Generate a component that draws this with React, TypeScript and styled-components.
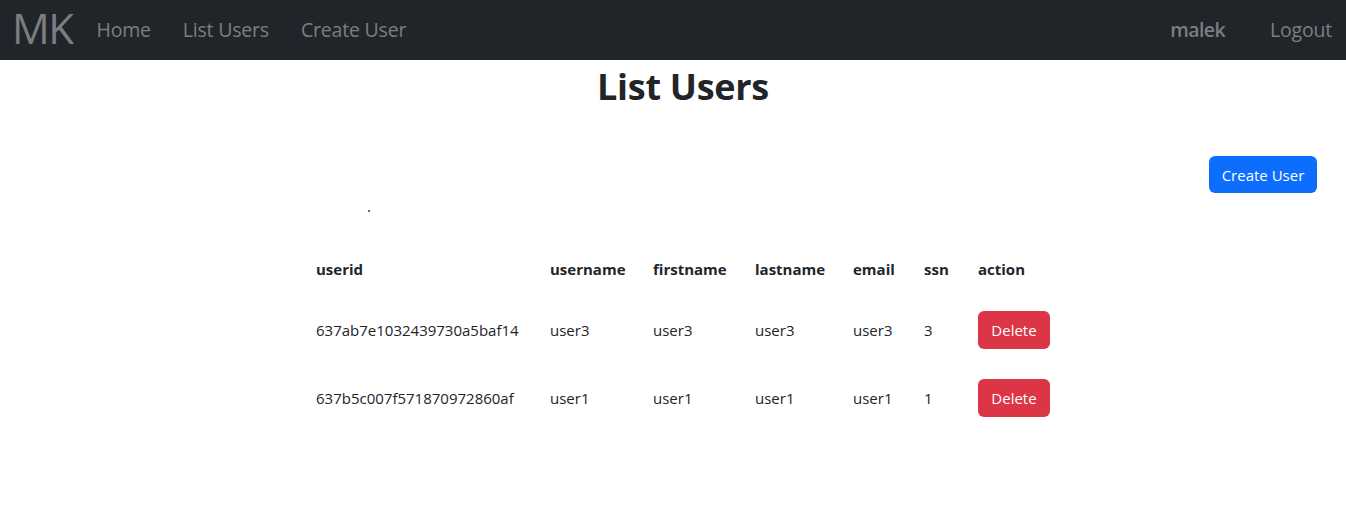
import React from "react";
import styled, { createGlobalStyle } from "styled-components";

const Global = createGlobalStyle`
  html, body { margin: 0; padding: 0; background: #fff; }
  body { font-family: "Open Sans", "Noto Sans", sans-serif; color: #212529; }
  * { box-sizing: border-box; }
`;

const Navbar = styled.nav`
  height: 60px;
  background: #212529;
  display: flex;
  align-items: center;
  padding: 0 14px 0 12px;
`;

const Brand = styled.span`
  font-size: 42px;
  color: #7b7e81;
  letter-spacing: -1.5px;
  margin-right: 24px;
  line-height: 1;
  margin-top: -4px;
`;

const NavList = styled.div<{ $right?: boolean }>`
  display: flex;
  align-items: center;
  gap: ${(p) => (p.$right ? "45px" : "32px")};
  margin-left: ${(p) => (p.$right ? "auto" : "0")};
  margin-top: -2px;
`;

const NavLink = styled.a<{ $strong?: boolean }>`
  font-size: 19.5px;
  color: #7b7e81;
  text-decoration: none;
  font-weight: ${(p) => (p.$strong ? 600 : 400)};
  letter-spacing: ${(p) => (p.$strong ? "-0.6px" : "-0.2px")};
`;

const Title = styled.h1`
  margin: 2px 0 0;
  padding-left: 20px;
  text-align: center;
  font-size: 36px;
  font-weight: 700;
  letter-spacing: -0.3px;
  line-height: 50px;
`;

const ToolRow = styled.div`
  display: flex;
  justify-content: flex-end;
  padding: 44px 29px 0 0;
`;

const Button = styled.button<{ $variant: "primary" | "danger" }>`
  font-family: inherit;
  font-size: 15px;
  border: none;
  border-radius: 6px;
  color: #fff;
  cursor: pointer;
  background: ${(p) => (p.$variant === "primary" ? "#0d6efd" : "#dc3545")};
`;

const CreateButton = styled(Button)`
  width: 108px;
  height: 37px;
`;

const DeleteButton = styled(Button)`
  width: 72px;
  height: 38px;
`;

const Dot = styled.div`
  margin: 17px 0 0 368px;
  width: 2px;
  height: 2px;
  background: #666;
`;

const Table = styled.div`
  margin: 30px 0 0 316px;
  display: grid;
  grid-template-columns: 234px 103px 102px 98px 71px 54px 80px;
  align-items: center;
  font-size: 15px;
`;

const Head = styled.div`
  font-weight: 700;
  height: 54px;
  display: flex;
  align-items: center;
`;

const Cell = styled.div`
  height: 68px;
  display: flex;
  align-items: center;
`;

const users = [
  { id: "637ab7e1032439730a5baf14", username: "user3", first: "user3", last: "user3", email: "user3", ssn: "3" },
  { id: "637b5c007f571870972860af", username: "user1", first: "user1", last: "user1", email: "user1", ssn: "1" },
];

const headers = ["userid", "username", "firstname", "lastname", "email", "ssn", "action"];

export default function App() {
  return (
    <>
      <Global />
      <Navbar>
        <Brand>MK</Brand>
        <NavList>
          <NavLink>Home</NavLink>
          <NavLink>List Users</NavLink>
          <NavLink>Create User</NavLink>
        </NavList>
        <NavList $right>
          <NavLink $strong>malek</NavLink>
          <NavLink>Logout</NavLink>
        </NavList>
      </Navbar>
      <Title>List Users</Title>
      <ToolRow>
        <CreateButton $variant="primary">Create User</CreateButton>
      </ToolRow>
      <Dot />
      <Table>
        {headers.map((h) => (
          <Head key={h}>{h}</Head>
        ))}
        {users.map((u) => (
          <React.Fragment key={u.id}>
            <Cell>{u.id}</Cell>
            <Cell>{u.username}</Cell>
            <Cell>{u.first}</Cell>
            <Cell>{u.last}</Cell>
            <Cell>{u.email}</Cell>
            <Cell>{u.ssn}</Cell>
            <Cell>
              <DeleteButton $variant="danger">Delete</DeleteButton>
            </Cell>
          </React.Fragment>
        ))}
      </Table>
    </>
  );
}
